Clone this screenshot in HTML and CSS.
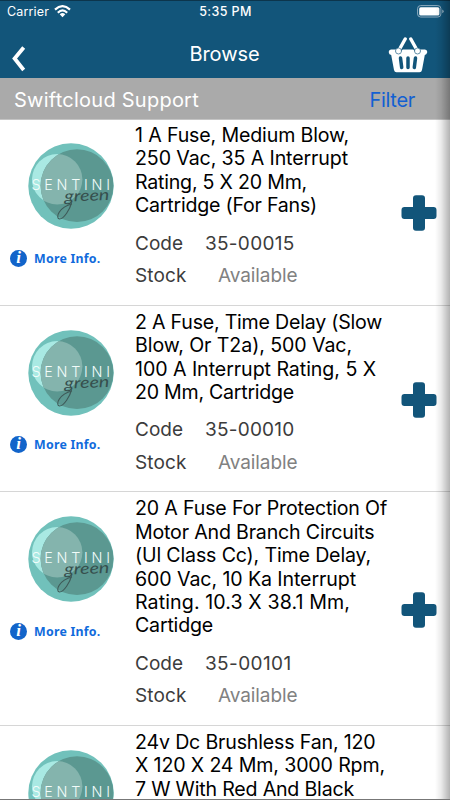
FILE: index.html
```html
<!DOCTYPE html>
<html lang="en">
<head>
<meta charset="utf-8">
<title>Browse</title>
<link rel="stylesheet" href="styles.css">
</head>
<body>
<svg class="defs" width="0" height="0" aria-hidden="true">
  <symbol id="logo" viewBox="0 0 86 86">
    <circle cx="43" cy="43" r="42.7" fill="#71c1bb"/>
    <circle cx="29.2" cy="36.3" r="25.2" fill="#a9e9e3"/>
    <circle cx="49" cy="42.7" r="36.4" fill="#5b9891"/>
    <clipPath id="inner"><circle cx="49" cy="42.7" r="36.4"/></clipPath>
    <circle cx="29.2" cy="36.3" r="25.2" fill="#84b4ad" clip-path="url(#inner)"/>
    <text class="logo-name" x="3.500" y="47" textLength="78.500">SENTINI</text>
    <text class="logo-script" x="36.500" y="58.500" textLength="45" lengthAdjust="spacingAndGlyphs" transform="rotate(-2 37 59)">green</text>
    <path d="M43.500 60C42 66 36 76 31.500 76C27 75 31 64 44 61" fill="none" stroke="#3e5957" stroke-width="1.100"/>
  </symbol>
  <symbol id="plus" viewBox="0 0 36 36">
    <path d="M15 0.300h6q3 0 3 3v8.700h8.500q3 0 3 3v6q0 3-3 3h-8.500v8.700q0 3-3 3h-6q-3 0-3-3v-8.700h-8.500q-3 0-3-3v-6q0-3 3-3h8.500v-8.700q0-3 3-3z" fill="#12557a"/>
  </symbol>
</svg>
<div class="screen">
  <header class="header">
    <div class="status">
      <div class="carrier"><span class="carrier-name">Carrier</span>
        <svg width="17" height="13" viewBox="0 0 17 13"><g fill="none" stroke="#fff" stroke-width="2.200"><path d="M1 4.600Q8.500-2.300 16 4.600"/><path d="M3.800 7.700Q8.500 3.200 13.200 7.700"/></g><path d="M5.700 9.200Q8.500 6.900 11.300 9.200L8.500 12.200z" fill="#fff"/></svg>
      </div>
      <span class="time">5:35 PM</span>
      <svg class="battery" width="27" height="13" viewBox="0 0 27 13"><rect x=".6" y=".6" width="23.300" height="11.400" rx="3" fill="none" stroke="#8fadc0"/><rect x="2.200" y="2.200" width="20.200" height="8.200" rx="1.500" fill="#fff"/><path d="M25.200 4.400q1.500.4 1.500 1.900t-1.500 1.900z" fill="#8fadc0"/></svg>
    </div>
    <nav class="nav">
      <svg class="back" width="14" height="26" viewBox="0 0 14 26"><path d="M11.700 1.500L2.600 12.500L11.700 24" fill="none" stroke="#fff" stroke-width="3.800"/></svg>
      <h1 class="title"><span class="fit" data-w="70">Browse</span></h1>
      <svg class="basket" width="40" height="36" viewBox="0 0 40 36"><path d="M3 12.500H37Q39.500 13 39.200 15.500Q38.500 17.500 36.800 18L34 33Q33.500 35.300 31.500 35.300H8.500Q6.500 35.300 6 33L3.200 18Q1 17.500.8 15.500Q.5 13 3 12.500Z" fill="#fff"/><g fill="none" stroke-linecap="round"><path d="M17.200 2L10.500 14M22.800 2L29.500 14" stroke="#12557a" stroke-width="5.600"/><path d="M12.500 21l1.200 9.500M20 21v9.500M27.500 21l-1.200 9.500" stroke="#12557a" stroke-width="3.500"/><path d="M17.200 2L10.500 14M22.800 2L29.500 14" stroke="#fff" stroke-width="3.400"/></g><circle cx="10.500" cy="14" r="3" fill="#fff" stroke="#12557a" stroke-width=".6"/><circle cx="29.500" cy="14" r="3" fill="#fff" stroke="#12557a" stroke-width=".6"/></svg>
    </nav>
  </header>
  <div class="filterbar"><span class="fit" data-w="185">Swiftcloud Support</span><a class="filter fit" data-w="45.500">Filter</a></div>
  <main class="list" id="list"></main>
  <div class="shade"></div>
</div>
<script src="app.js"></script>
</body>
</html>
```
FILE: styles.css
```css
* { box-sizing: border-box; }
body { margin: 0; background: #fff; font-family: Inter, "Liberation Sans", sans-serif; }
.defs { position: absolute; }
.screen { position: relative; width: 450px; height: 800px; overflow: hidden; border-bottom: 1px solid #777; }
.header { height: 78px; background: #12557a; color: #fff; border-top: 1px solid #0c354c; }
.status { display: grid; grid-template-columns: 1fr auto 1fr; align-items: center; height: 21px; padding: 0 6px 0 7px; font-size: 12.5px; }
.carrier { display: flex; align-items: center; gap: 5px; }
.carrier-name { letter-spacing: .15px; }
.time { font-weight: 500; letter-spacing: .4px; }
.battery { justify-self: end; }
.nav { display: grid; grid-template-columns: 1fr auto 1fr; align-items: center; height: 56px; padding: 8px 22px 0 12px; }
.title { margin: 0; padding-left: 9px; font-size: 20px; font-weight: 400; line-height: 24px; }
.back { margin-top: 9px; }
.basket { justify-self: end; margin-top: 1px; }
.filterbar { display: flex; justify-content: space-between; align-items: center; height: 42px; padding: 2px 35px 0 14px; background: #aaa; color: #fff; font-size: 20px; border-bottom: 1px solid #c4c4c4; }
.filter { color: #1260d2; }
.list { margin-top: -1px; }
.row { display: grid; grid-template-columns: 135px 1fr 50px; padding-bottom: 12.7px; border-bottom: 1px solid #d6d6d6; }
.media { padding-top: 24px; }
.logo { display: block; width: 86px; height: 86px; margin-left: 28px; }
.logo-name { font-family: Inter, sans-serif; font-size: 14.3px; font-weight: 300; fill: #f2fcfa; }
.logo-script { font-family: Lato, sans-serif; font-size: 15.5px; font-style: italic; font-weight: 400; fill: #364f4d; }
.more { display: flex; align-items: center; gap: 7px; margin: 20px 0 0 10px; height: 18px; color: #116bdc; font-family: "Noto Sans", sans-serif; font-weight: 700; font-size: 12.4px; }
.info { display: flex; justify-content: center; width: 17px; height: 17px; border-radius: 50%; background: #1264ca; color: #fff; font: italic 700 17px/16px "Liberation Serif", serif; }
.text { padding-top: 5px; font-size: 19.6px; color: #000; white-space: nowrap; }
.name { display: grid; justify-items: start; grid-auto-rows: 23.45px; line-height: 23.45px; }
.meta { display: grid; grid-template-columns: 70px 1fr; grid-auto-rows: 32.6px; align-items: center; margin-top: 9px; color: #3c3c3c; font-size: 19px; }
.meta .stock { padding-left: 13px; color: #818181; }
.fit { display: inline-block; width: max-content; }
.add { align-self: center; width: 36px; height: 36px; margin: 16px 0 0 .5px; }
.shade { position: absolute; top: 0; right: 0; width: 15px; height: 800px; background: linear-gradient(to right, rgba(0,0,0,0), rgba(0,0,0,.08) 40%, rgba(0,0,0,.3)); }
```
FILE: app.js
```js
const items = [
  { code: '35-00015', cw: 89.5, lines: [['1 A Fuse, Medium Blow,', 214], ['250 Vac, 35 A Interrupt', 213], ['Rating, 5 X 20 Mm,', 172], ['Cartridge (For Fans)', 182]] },
  { code: '35-00010', cw: 89.5, lines: [['2 A Fuse, Time Delay (Slow', 247], ['Blow, Or T2a), 500 Vac,', 217], ['100 A Interrupt Rating, 5 X', 241], ['20 Mm, Cartridge', 159]] },
  { code: '35-00101', cw: 86.5, lines: [['20 A Fuse For Protection Of', 252], ['Motor And Branch Circuits', 239.5], ['(Ul Class Cc), Time Delay,', 236], ['600 Vac, 10 Ka Interrupt', 221], ['Rating. 10.3 X 38.1 Mm,', 215], ['Cartidge', 78]] },
  { lines: [['24v Dc Brushless Fan, 120', 240.5], ['X 120 X 24 Mm, 3000 Rpm,', 250], ['7 W With Red And Black', 219]] }
];

const details = item => `
  <div class="meta">
    <span><span class="fit" data-w="48">Code</span></span><span><span class="fit" data-w="${item.cw}">${item.code}</span></span>
    <span><span class="fit" data-w="51.5">Stock</span></span><span class="stock"><span class="fit" data-w="79.5">Available</span></span>
  </div>`;

document.getElementById('list').innerHTML = items.map(item => `
  <article class="row">
    <div class="media">
      <svg class="logo"><use href="#logo"/></svg>
      ${item.code ? '<div class="more"><span class="info">i</span><span class="fit" data-w="66.5">More Info.</span></div>' : ''}
    </div>
    <div class="text">
      <div class="name">${item.lines.map(([t, w]) => `<span class="fit" data-w="${w}">${t}</span>`).join('')}</div>
      ${item.code ? details(item) : ''}
    </div>
    ${item.code ? '<svg class="add"><use href="#plus"/></svg>' : ''}
  </article>`).join('');

document.querySelectorAll('.fit').forEach(el => {
  const gap = Number(el.dataset.w) - el.getBoundingClientRect().width;
  el.style.letterSpacing = `${gap / el.textContent.length}px`;
});
```
